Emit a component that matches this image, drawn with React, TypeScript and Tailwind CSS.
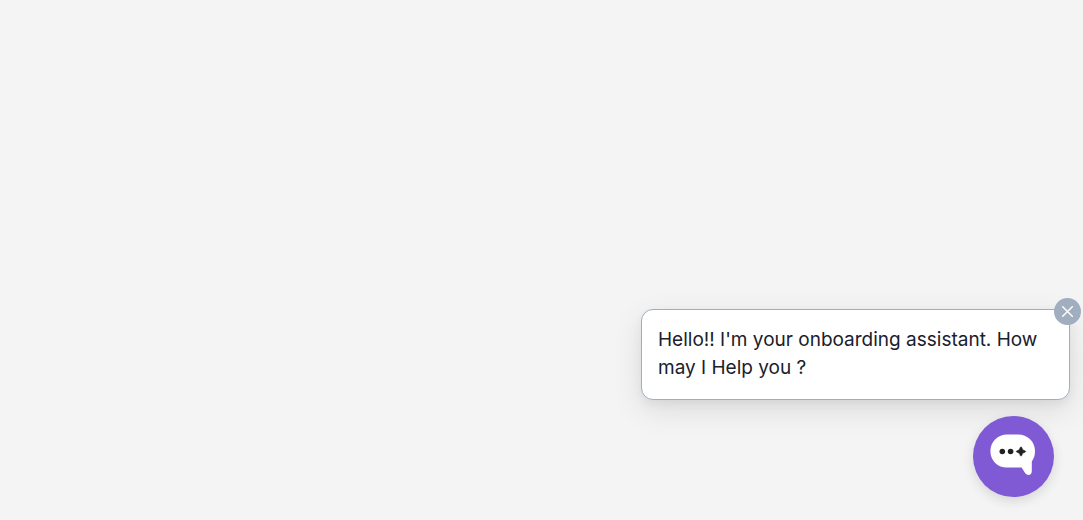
import { useState } from "react";

function ChatIcon() {
    return (
        <svg
            className="w-[45px] h-[42px]"
            viewBox="0 0 45 42"
            aria-hidden="true"
        >
            <path
                d="M17.3 0.5H28C37.5 0.5 45 7.5 45 17C45 21.5 43.8 24.8 41.8 27.5V37C41.8 39.8 40.4 41 38.6 41C36.9 41 35.8 40.2 34.8 38.6L31.6 33.6H17C7.8 33.6 0.4 26.6 0.4 17.2C0.4 7.8 7.8 0.5 17.3 0.5Z"
                fill="#fff"
            />
            <circle cx="12.3" cy="17.5" r="2.8" fill="#222" />
            <circle cx="20.6" cy="17.5" r="2.8" fill="#222" />
            <path
                d="M31 12.8C31.7 12.8 32.2 14.8 32.8 15.7C33.7 16.3 35.7 16.8 35.7 17.5C35.7 18.2 33.7 18.7 32.8 19.3C32.2 20.2 31.7 22.2 31 22.2C30.3 22.2 29.8 20.2 29.2 19.3C28.3 18.7 26.3 18.2 26.3 17.5C26.3 16.8 28.3 16.3 29.2 15.7C29.8 14.8 30.3 12.8 31 12.8Z"
                fill="#222"
                stroke="#222"
                strokeWidth="0.5"
            />
        </svg>
    );
}

export default function App() {
    const [visible, setVisible] = useState(true);

    return (
        <main className="min-h-screen bg-[#f4f4f4] flex flex-col items-end justify-end gap-4 pb-[23px] font-['Inter',sans-serif]">
            {visible && (
                <section className="relative w-full max-w-[429px] mr-[13px] rounded-xl border border-[#a0aec0] bg-white px-4 pt-4 pb-[17px] shadow-[0_10px_30px_rgba(0,0,0,0.1),0_4px_10px_rgba(0,0,0,0.05)]">
                    <p className="text-[19px] leading-[28px] text-[#1a202c]">
                        Hello!! I'm your onboarding assistant. How may I Help
                        you ?
                    </p>
                    <button
                        type="button"
                        aria-label="Close message"
                        className="absolute -top-3 -right-3 size-[27px] rounded-full bg-[#a0aec0] text-white flex items-center justify-center"
                        onClick={() => setVisible(false)}
                    >
                        <svg
                            className="size-[11px]"
                            viewBox="0 0 11 11"
                            fill="none"
                            stroke="currentColor"
                            strokeWidth="1.4"
                            strokeLinecap="round"
                            aria-hidden="true"
                        >
                            <path d="M0.7 0.7L10.3 10.3M10.3 0.7L0.7 10.3" />
                        </svg>
                    </button>
                </section>
            )}

            <button
                type="button"
                aria-label="Open chat"
                className="relative size-[81px] mr-[29px] rounded-full bg-[#805ad5] flex items-center justify-center pb-[3px] pr-[2px] shadow-[0_4px_12px_rgba(0,0,0,0.12)]"
                onClick={() => setVisible(true)}
            >
                <ChatIcon />
            </button>
        </main>
    );
}
